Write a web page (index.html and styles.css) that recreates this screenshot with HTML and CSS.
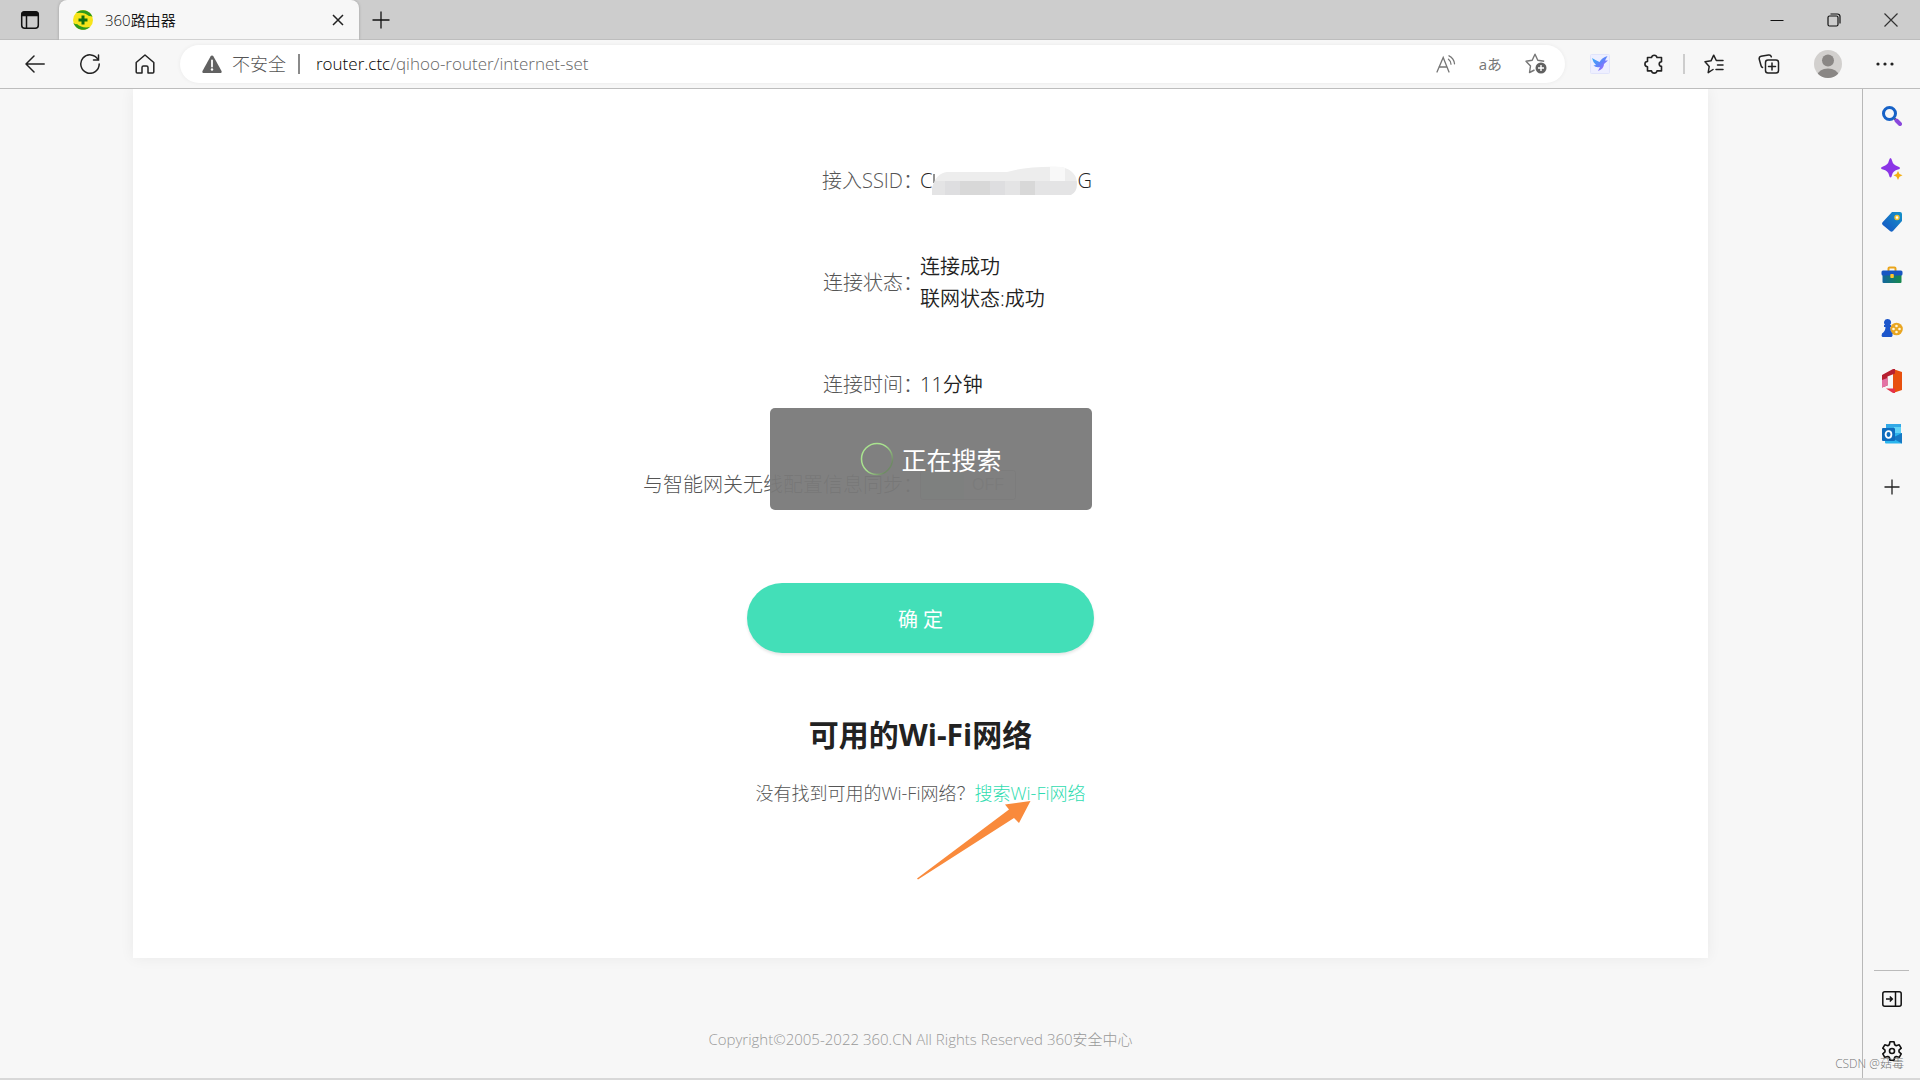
FILE: index.html
```html
<!DOCTYPE html>
<html lang="zh-CN">
<head>
    <meta charset="UTF-8">
    <title>360路由器</title>
    <link rel="stylesheet" href="styles.css">
</head>
<body>
    <div class="browser">
        <header class="tab-strip">
            <button class="tab-actions" aria-label="标签操作">
                <svg width="20" height="20" viewBox="0 0 20 20" fill="none" stroke="#111" stroke-width="1.5"><rect x="1.7" y="1.7" width="16.6" height="16.6" rx="3"/><path d="M6.5 6v12"/><path d="M2 5.5V4.5a2.5 2.5 0 0 1 2.5-2.5h11a2.5 2.5 0 0 1 2.5 2.5v1z" fill="#111"/></svg>
            </button>
            <div class="tab">
                <svg class="favicon" width="20" height="20" viewBox="0 0 20 20"><circle cx="10" cy="10" r="10" fill="#f7e41a"/><path d="M3 3A10 10 0 0 1 19.5 7Q18 5.5 16 6 11 1.500 3 3z" fill="#2f9a1c"/><path d="M17 17A10 10 0 0 1 .5 13Q2 14.500 4 14 9 18.500 17 17z" fill="#2f9a1c"/><path d="M10 5.500v9M5.500 10h9" stroke="#12700f" stroke-width="3"/></svg>
                <span class="tab-title">360路由器</span>
                <button class="tab-close" aria-label="关闭标签">
                    <svg width="12" height="12" viewBox="0 0 12 12" stroke="#222" stroke-width="1.5"><path d="M1 1l10 10M11 1L1 11"/></svg>
                </button>
            </div>
            <button class="new-tab" aria-label="新建标签页">
                <svg width="18" height="18" viewBox="0 0 18 18" stroke="#111" stroke-width="1.3"><path d="M9 .5v17M.5 9h17"/></svg>
            </button>
            <div class="window-buttons">
                <button aria-label="最小化"><svg width="14" height="14" viewBox="0 0 14 14" stroke="#111"><path d="M.5 7.5h13"/></svg></button>
                <button aria-label="还原"><svg width="14" height="14" viewBox="0 0 14 14" fill="none" stroke="#111" stroke-width="1.2"><rect x="1" y="3" width="10" height="10" rx="1.5"/><path d="M3.5 1h7A2.5 2.5 0 0 1 13 3.5v7"/></svg></button>
                <button aria-label="关闭"><svg width="14" height="14" viewBox="0 0 14 14" stroke="#333" stroke-width="1.2"><path d="M.5 .5l13 13M13.5 .5l-13 13"/></svg></button>
            </div>
        </header>

        <nav class="toolbar">
            <div class="nav-buttons">
                <button aria-label="后退"><svg width="20" height="18" viewBox="0 0 20 18" fill="none" stroke="#222" stroke-width="1.5" stroke-linecap="round" stroke-linejoin="round"><path d="M19.2 9H1M9 1L1 9l8 8"/></svg></button>
                <button aria-label="刷新"><svg width="20" height="20" viewBox="0 0 20 20" fill="none" stroke="#222" stroke-width="1.5" stroke-linecap="round"><path d="M18 5.5A9.2 9.2 0 1 0 19.2 10"/><path d="M18.5 1v5h-5"/></svg></button>
                <button aria-label="主页"><svg width="20" height="20" viewBox="0 0 20 20" fill="none" stroke="#222" stroke-width="1.5" stroke-linejoin="round"><path d="M1.2 8.5L10 1l8.8 7.5V18a1 1 0 0 1-1 1H13v-5.5a1.5 1.5 0 0 0-1.5-1.5h-3A1.5 1.5 0 0 0 7 13.5V19H2.2a1 1 0 0 1-1-1z"/></svg></button>
            </div>
            <div class="address-bar">
                <svg width="20" height="18" viewBox="0 0 20 18"><path d="M10 .5c.7 0 1.2.4 1.5.9l8 14.5c.5 1-.1 2.1-1.3 2.1H1.8C.6 18 0 16.900.5 15.900l8-14.5C8.800.9 9.300.5 10 .5z" fill="#616161"/><path d="M10 5.5v6" stroke="#fff" stroke-width="1.8" stroke-linecap="round"/><circle cx="10" cy="14.5" r="1.2" fill="#fff"/></svg>
                <span class="insecure">不安全</span>
                <span class="divider"></span>
                <span class="url"><b>router.ctc</b>/qihoo-router/internet-set</span>
                <button aria-label="大声朗读"><svg width="20" height="18" viewBox="0 0 20 18" fill="none" stroke="#767676" stroke-width="1.3" stroke-linecap="round"><path d="M1 17L7.2 2.5 13 17M3 12h8M12.5 4.2q2.5 2 2.5 5M13 .8q5 2.5 5.5 8"/></svg></button>
                <button class="translate" aria-label="翻译">aあ</button>
                <button aria-label="收藏"><svg width="22" height="21" viewBox="0 0 22 21" fill="none" stroke="#767676" stroke-width="1.4" stroke-linejoin="round"><path d="M9.5 17l-5 2.5 1-6.5L1 8.2l6.2-1L10 1.2l2.8 6 6.4 1"/><circle cx="16" cy="15" r="5.5" fill="#616161" stroke="none"/><path d="M16 12v6M13 15h6" stroke="#fff"/></svg></button>
            </div>
            <div class="extensions">
                <button aria-label="扩展"><svg width="20" height="20" viewBox="0 0 20 20"><defs><linearGradient id="bird" x1="0" y1="0" x2="1" y2="1"><stop offset="0" stop-color="#30b6f5"/><stop offset=".5" stop-color="#5f83fb"/><stop offset="1" stop-color="#c75cff"/></linearGradient></defs><rect x=".5" y=".5" width="19" height="19" rx="1" fill="#eeefff" stroke="#e1e4fb"/><path d="M2 4q4 2.500 7.500 4Q12 3.500 17.500 2l-2.500 4.500h3l-4 3.500q0 5-6 7l2-4Q6 14 3.500 11.500L6 11Q3 8.500 2 4z" fill="url(#bird)"/></svg></button>
                <button aria-label="扩展管理"><svg width="20" height="20" viewBox="0 0 20 20" fill="none" stroke="#222" stroke-width="1.6" stroke-linejoin="round"><path d="M3.5 3.5h4a2.8 2.8 0 0 1 5.5 0h4.500v4.300a2.3 2.3 0 0 0 0 4.600v4.500H13a2.8 2.8 0 0 1-5.5 0h-4v-4.200a2.6 2.6 0 0 1 0-5.2z"/></svg></button>
                <span class="divider light"></span>
                <button aria-label="收藏夹"><svg width="20" height="20" viewBox="0 0 20 20" fill="none" stroke="#222" stroke-width="1.5" stroke-linejoin="round" stroke-linecap="round"><path d="M9 15.5L4.2 18.7l1-6.200L1 7.800l6-1 2.700-5.600 2.600 5.300H19M13.5 11H19M12 15.500h7"/></svg></button>
                <button aria-label="集锦"><svg width="22" height="20" viewBox="0 0 22 20" fill="none" stroke="#222" stroke-width="1.5" stroke-linecap="round"><rect x="7.5" y="6" width="13" height="13" rx="2.5"/><path d="M14 9v7M10.5 12.5h7M4.5 13.5A3 3 0 0 1 3 11.5L1.2 5A2.5 2.5 0 0 1 3 2.200L10.500 1a2.500 2.500 0 0 1 2.800 1.800"/></svg></button>
                <button aria-label="个人资料"><svg width="28" height="28" viewBox="0 0 28 28"><defs><clipPath id="round"><circle cx="14" cy="14" r="14"/></clipPath></defs><g clip-path="url(#round)"><path d="M0 0h28v28H0z" fill="#d2d0ce"/><g fill="#8a8785"><circle cx="14" cy="10.5" r="6"/><ellipse cx="14" cy="25.5" rx="10.5" ry="7"/></g></g></svg></button>
                <button aria-label="设置及其他"><svg width="18" height="4" viewBox="0 0 18 4" fill="#222"><circle cx="2" cy="2" r="1.6"/><circle cx="9" cy="2" r="1.6"/><circle cx="16" cy="2" r="1.6"/></svg></button>
            </div>
        </nav>

        <div class="workspace">
            <div class="page">
                <main class="card">
                    <div class="row">
                        <span class="label">接入SSID：</span>
                        <div class="value ssid"><span>C</span><svg class="mask" width="145" height="30" viewBox="0 0 145 30"><defs><clipPath id="blob"><path d="M0 29V22Q4 7 15 6H75Q95 0 130 1 145 5 145 18 145 26 139 29z"/></clipPath></defs><path d="M2 8v9" stroke="#222"/><g clip-path="url(#blob)"><path d="M0 0h146v15H0z" fill="#ededed"/><path d="M0 15h146v15H0z" fill="#e4e4e5"/><path d="M13 15h15v15H13zM58 15h15v15H58z" fill="#dedee0"/><path d="M28 15h30v15H28zM88 15h15v15H88z" fill="#d8d8d8"/><path d="M118 0h15v15h-15z" fill="#f8f8f8"/></g></svg><span>G</span></div>
                    </div>
                    <div class="row">
                        <span class="label">连接状态：</span>
                        <div class="value">连接成功<br>联网状态:成功</div>
                    </div>
                    <div class="row">
                        <span class="label">连接时间：</span>
                        <div class="value">11分钟</div>
                    </div>
                    <div class="row row-sync">
                        <label class="label" for="sync">与智能网关无线配置信息同步：</label>
                        <div class="value"><input class="switch" type="checkbox" id="sync"></div>
                    </div>
                    <button class="confirm">确 定</button>
                    <h2>可用的Wi-Fi网络</h2>
                    <p class="hint">没有找到可用的Wi-Fi网络？<a href="#">搜索Wi-Fi网络</a></p>
                    <svg class="arrow" width="114" height="79" viewBox="0 0 114 79"><path d="M0 77.5L92 8.500 88 3.500 113.500 0 102 22 97 17 1 78.500z" fill="#f98a3c"/></svg>
                </main>
                <footer>Copyright©2005-2022 360.CN All Rights Reserved 360安全中心</footer>
            </div>
            <div class="toast" role="status">
                <svg width="34" height="34" viewBox="0 0 34 34" fill="none" stroke-width="1.5"><defs><linearGradient id="fade" x1=".6" y1=".3" x2="1" y2=".6"><stop offset="0" stop-color="#a9e38f"/><stop offset="1" stop-color="#6f8a65"/></linearGradient></defs><circle cx="17" cy="17" r="15.5" stroke="url(#fade)"/></svg>
                <span>正在搜索</span>
            </div>

            <aside class="sidebar">
                <button aria-label="搜索"><svg width="20" height="20" viewBox="0 0 20 20" fill="none"><path d="M12.5 12.5l2 2" stroke="#444" stroke-width="2"/><path d="M14.5 14.5l3.5 3.5" stroke="#8a48dc" stroke-width="4" stroke-linecap="round"/><circle cx="7.5" cy="7.5" r="6" stroke="#1762c7" stroke-width="3"/></svg></button>
                <button aria-label="发现"><svg width="22" height="22" viewBox="0 0 22 22"><path d="M9.5 0q1 0 1.5 2.5 1 4.5 6 6 2 .5 2 1.5t-2 1.5q-5 1-6 5.5-.5 2.5-1.5 2.5T8 17q-1-4.5-6-5.5-2-.5-2-1.5t2-1.5q5-1.5 6-6Q8.5 0 9.5 0z" fill="#8b35e6"/><path d="M17 13l1.5 3 3 1.3-3 1.4L17 22l-1.5-3.3-3-1.4 3-1.3z" fill="#f3ae13"/></svg></button>
                <button aria-label="购物"><svg width="20" height="20" viewBox="0 0 20 20"><defs><linearGradient id="tag" x1="1" y1="0" x2="0" y2="1"><stop offset="0" stop-color="#1593c8"/><stop offset="1" stop-color="#1552c4"/></linearGradient></defs><path d="M10 0h8q2 0 2 2v7L11 19q-1.5 1.5-3 0L.8 13q-1.5-1.5 0-3z" fill="url(#tag)"/><circle cx="15" cy="5.5" r="2" fill="#fff" stroke="#f7c52c" stroke-width="1.4"/></svg></button>
                <button aria-label="工具"><svg width="22" height="18" viewBox="0 0 22 18"><defs><linearGradient id="box" x1="0" x2="1"><stop offset="0" stop-color="#12669e"/><stop offset="1" stop-color="#178a4c"/></linearGradient></defs><path d="M7.5 5V2.5Q7.5 1.5 8.5 1.5h5q1 0 1 1V5" fill="none" stroke="#eaa51c" stroke-width="2"/><path d="M1.5 8h19v8q0 1-1 1h-17q-1 0-1-1z" fill="url(#box)"/><rect x=".5" y="4.5" width="21" height="5" rx="1.5" fill="#1756c2"/><rect x="9.3" y="8" width="3.5" height="4" rx=".8" fill="#ffc52c"/></svg></button>
                <button aria-label="游戏"><svg width="22" height="20" viewBox="0 0 22 20"><circle cx="15.5" cy="11" r="6.3" fill="#e9a622"/><g fill="#fff6d8"><circle cx="15.5" cy="8" r="1.3"/><circle cx="15.5" cy="14" r="1.3"/><circle cx="12.5" cy="11" r="1.3"/><circle cx="18.5" cy="11" r="1.3"/></g><path d="M6.5 1a3.5 3.5 0 0 1 2.6 6H10v2H9q0 4 2.5 6.5.5 3-1 3.5h-9Q0 18 1 15.5 4.5 13 4.5 9H3V7h1A3.5 3.5 0 0 1 6.5 1z" fill="#1c56cb"/></svg></button>
                <button aria-label="Office"><svg width="20" height="24" viewBox="0 0 20 24"><path d="M11 0l9 3v18l-9 3z" fill="#e8500e"/><path d="M0 6L11 0h2v4.500L5.500 7.500v9L0 18.500z" fill="#b72030"/><path d="M0 11l5.500-2v7.500L0 18.500z" fill="#e473a5"/><path d="M4 19.500h9V24h-2z" fill="#e5324a"/></svg></button>
                <button aria-label="Outlook"><svg width="20" height="20" viewBox="0 0 20 20"><path d="M4 0h15v11H4z" fill="#32a9e7"/><path d="M12 3h7v6h-7z" fill="#61d3f7"/><path d="M3 10l17-1v10.5H4q-1 0-1-1z" fill="#2bb5ee"/><path d="M20 9v10.5L10 14z" fill="#1679c4"/><rect y="4" width="13" height="13" rx="1" fill="#0f6cbd"/><ellipse cx="6.5" cy="10.5" rx="2.9" ry="3.3" fill="none" stroke="#fff" stroke-width="1.8"/></svg></button>
                <button class="add" aria-label="添加"><svg width="16" height="16" viewBox="0 0 16 16" stroke="#222" stroke-width="1.3"><path d="M8 .5v15M.5 8h15"/></svg></button>
                <div class="sidebar-bottom">
                    <button aria-label="隐藏侧栏"><svg width="20" height="16" viewBox="0 0 20 16" fill="none" stroke="#111" stroke-width="1.5"><rect x=".8" y=".8" width="18.4" height="14.4" rx="2"/><path d="M13.5 1v14M4 8h6M7.800 5.500L10.300 8l-2.500 2.500"/></svg></button>
                    <button aria-label="设置"><svg width="20" height="20" viewBox="0 0 20 20" fill="none" stroke="#111" stroke-width="1.6" stroke-linejoin="round"><path d="M8 .8h4l.7 3 1.500.9 3-.9 2 3.400L17 9.200v1.700l2.200 2-2 3.400-3-.8-1.500.8-.7 2.900H8l-.7-2.900-1.500-.8-3 .8-2-3.400 2.200-2V9.200L.8 7.200l2-3.400 3 .9 1.500-.9z"/><circle cx="10" cy="10" r="2.5"/></svg></button>
                </div>
            </aside>
            <span class="watermark">CSDN @菇毒</span>
        </div>
    </div>
</body>
</html>
```
FILE: styles.css
```css
* {
    margin: 0;
    padding: 0;
    box-sizing: border-box;
}

body {
    font-family: "Open Sans", "Noto Sans CJK SC", sans-serif;
    font-weight: 300;
    background: #f7f7f7;
    color: #222;
}

button {
    border: none;
    background: none;
    font-family: inherit;
    cursor: pointer;
}

svg {
    display: block;
    flex-shrink: 0;
}

a {
    color: #2fdcb0;
    text-decoration: none;
}

.browser {
    display: flex;
    flex-direction: column;
    height: 100vh;
    border-bottom: 2px solid #d8d8d8;
}

/* tab strip */
.tab-strip {
    display: flex;
    align-items: center;
    height: 40px;
    background: #cdcdcd;
    border-bottom: 1px solid #bdbdbd;
}

.tab-actions {
    padding: 0 19px 0 20px;
}

.tab {
    display: flex;
    align-items: center;
    gap: 12px;
    width: 300px;
    height: 40px;
    padding: 0 15px 0 14px;
    background: #f7f7f7;
    border-radius: 8px 8px 0 0;
    box-shadow: 0 0 3px rgba(0, 0, 0, 0.25);
    clip-path: inset(0 -4px 0 -4px);
}

.tab-title {
    flex: 1;
    font-size: 15px;
    font-weight: 350;
    line-height: 20px;
    color: #111;
}

.new-tab {
    padding: 0 13px;
}

.window-buttons {
    display: flex;
    margin-left: auto;
    padding-right: 1px;
}

.window-buttons button {
    display: flex;
    justify-content: center;
    width: 57px;
}

/* toolbar */
.toolbar {
    display: flex;
    align-items: center;
    height: 49px;
    padding-bottom: 1px;
    border-bottom: 1px solid #bdbdbd;
}

.nav-buttons {
    display: flex;
    align-items: center;
    gap: 35px;
    padding: 0 25px;
}

.address-bar {
    display: flex;
    flex: 1;
    align-items: center;
    height: 38px;
    padding: 0 18px 0 22px;
    background: #fff;
    border-radius: 19px;
    box-shadow: 0 0 4px rgba(0, 0, 0, 0.06);
    font-size: 18px;
    line-height: 24px;
    color: #555;
}

.address-bar button {
    margin-left: 23px;
}

.insecure {
    margin-left: 10px;
}

.divider {
    width: 2px;
    height: 20px;
    margin: 0 16px 0 12px;
    background: #8a8a8a;
}

.url {
    flex: 1;
    font-weight: 350;
    font-size: 17px;
    color: #666;
}

.url b {
    font-weight: 350;
    color: #000;
}

.translate {
    font-size: 15px;
    color: #767676;
}

.extensions {
    display: flex;
    align-items: center;
    gap: 34px;
    padding: 0 26px 0 25px;
}

.extensions .light {
    margin: 0 -15px;
    background: #cdcdcd;
}

/* page and sidebar */
.workspace {
    position: relative;
    display: flex;
    flex: 1;
    min-height: 0;
}

.page {
    flex: 1;
    padding: 0 154px 0 133px;
    border-right: 1px solid #b8b8b8;
    overflow: hidden;
}

.card {
    display: flex;
    flex-direction: column;
    align-items: center;
    padding: 76px 0 78px;
    background: #fff;
    box-shadow: 0 0 14px rgba(0, 0, 0, 0.06);
    font-size: 20px;
}

.row {
    display: grid;
    grid-template-columns: 1fr 1fr;
    align-items: center;
    gap: 7px;
    width: 100%;
    min-height: 32px;
    margin-bottom: 54px;
    padding-right: 8px;
    line-height: 32px;
}

.row-sync {
    min-height: 60px;
    margin-bottom: 68px;
}

.label {
    font-feature-settings: "halt";
    text-align: right;
    color: #555;
}

.value {
    font-weight: 350;
}

.ssid {
    display: flex;
    align-items: center;
}

.switch {
    display: flex;
    align-items: center;
    justify-content: flex-end;
    width: 96px;
    height: 30px;
    padding-right: 11px;
    appearance: none;
    border: 1px solid #aaa;
    border-radius: 3px;
    background: linear-gradient(90deg, #d5eee8 46%, #fff 46%);
}

.switch::after {
    content: "OFF";
    font-size: 16px;
    color: #999;
}

.confirm {
    width: 347px;
    height: 70px;
    border-radius: 35px;
    background: #43dfb8;
    box-shadow: 0 2px 3px rgba(0, 0, 0, 0.1);
    font-size: 20px;
    color: #fff;
}

h2 {
    margin-top: 62px;
    font-size: 30px;
    font-weight: 700;
    line-height: 40px;
}

.hint {
    margin-top: 24px;
    font-size: 18px;
    line-height: 28px;
    color: #555;
}

.arrow {
    margin-top: -6px;
    margin-left: 107px;
}

footer {
    padding-top: 69px;
    font-size: 15px;
    line-height: 24px;
    text-align: center;
    color: #999;
}

.toast {
    position: absolute;
    top: 319px;
    left: calc(50% - 190px);
    display: flex;
    align-items: center;
    justify-content: center;
    gap: 7px;
    width: 322px;
    height: 102px;
    border-radius: 5px;
    background: rgba(121, 121, 121, 0.95);
    font-size: 25px;
    font-weight: 400;
    color: #fff;
}

.sidebar {
    display: flex;
    flex-direction: column;
    align-items: center;
    width: 57px;
}

.sidebar button {
    display: flex;
    align-items: center;
    justify-content: center;
    width: 35px;
    height: 53px;
}

.sidebar-bottom {
    margin-top: auto;
    padding: 2px 0 1px;
    border-top: 1px solid #bbb;
}

.sidebar-bottom button {
    height: 52px;
}

.watermark {
    position: absolute;
    right: 16px;
    bottom: 4px;
    font-size: 12px;
    line-height: 20px;
    color: #777;
}
```
